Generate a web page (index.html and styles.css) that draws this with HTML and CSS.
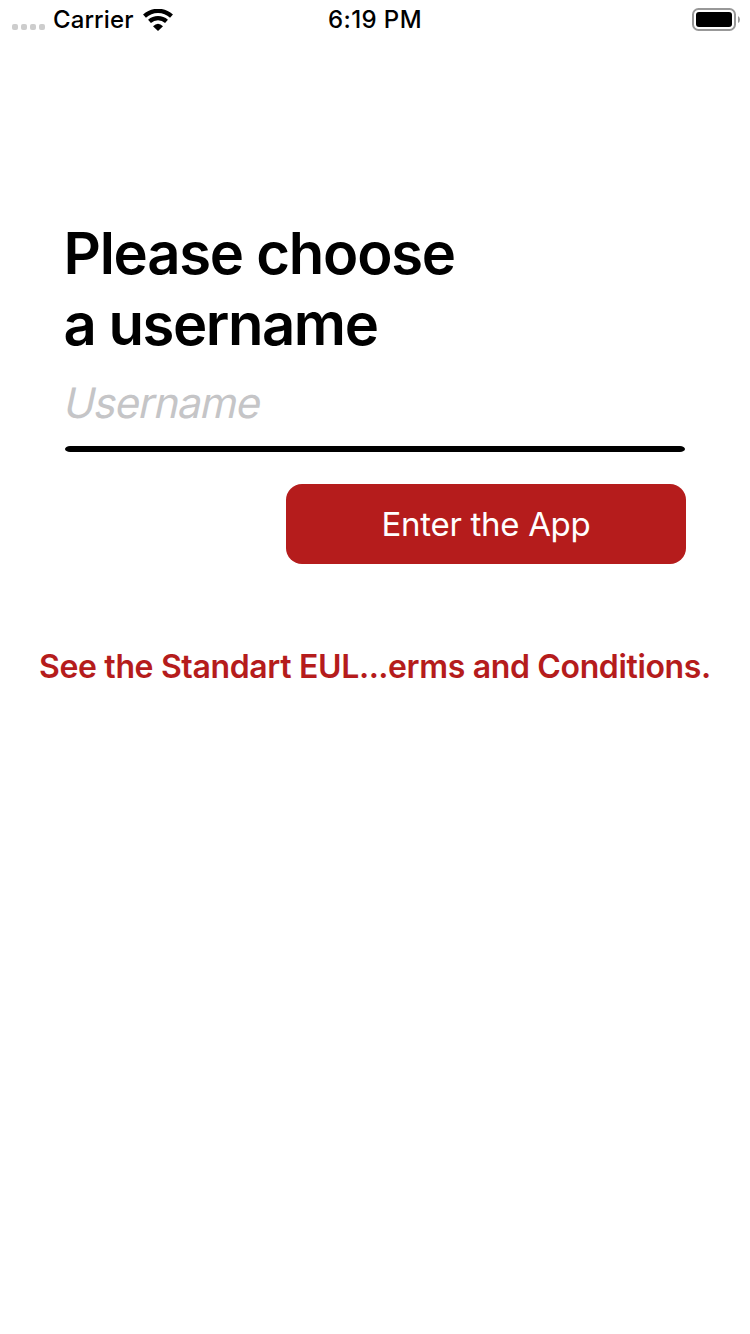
FILE: index.html
```html
<!DOCTYPE html>
<html lang="en">
<head>
<meta charset="utf-8">
<title>Choose a username</title>
<link rel="stylesheet" href="styles.css">
</head>
<body>
<header class="status">
  <div class="status-left">
    <span class="signal"><i class="dot"></i><i class="dot"></i><i class="dot"></i><i class="dot"></i></span>
    <span class="carrier">Carrier</span>
    <svg class="wifi" width="30" height="22" viewBox="0 0 30 22">
      <g fill="none" stroke="#000" stroke-width="4.3">
        <path d="M1.5 7.1 A20 20 0 0 1 28.5 7.1"/>
        <path d="M6.5 12.3 A12.8 12.8 0 0 1 23.5 12.3"/>
      </g>
      <path d="M10 17.3 Q15 12.3 20 17.3 L15 22 Z"/>
    </svg>
  </div>
  <span class="time">6:19 PM</span>
  <div class="status-right">
    <svg width="49" height="24" viewBox="0 0 49 24">
      <rect x="1" y="1" width="42" height="21" rx="5.5" fill="none" stroke="#989898" stroke-width="2"/>
      <rect x="4" y="4" width="36" height="15" rx="3" fill="#000"/>
      <path d="M46 8 Q48 9 48 11.5 Q48 14 46 15 Z" fill="#989898"/>
    </svg>
  </div>
</header>
<main class="form">
  <h1 class="title"><span class="line-one">Please choose</span><br><span class="line-two">a username</span></h1>
  <input class="field" type="text" placeholder="Username" aria-label="Username">
  <svg class="rule" width="620" height="6" viewBox="0 0 620 6"><rect width="620" height="6" rx="5" ry="3"/></svg>
  <button class="enter" type="button">Enter the App</button>
</main>
<a class="terms">See the Standart EUL<span class="ellipsis">...</span>erms and Conditions.</a>
</body>
</html>
```
FILE: styles.css
```css
* {
  box-sizing: border-box;
}

body {
  margin: 0;
  min-height: 1334px;
  background: #fff;
  color: #000;
  font-family: Inter, "Liberation Sans", sans-serif;
}

.status {
  display: grid;
  grid-template-columns: 1fr auto 1fr;
  height: 40px;
  padding: 0 9px 0 12px;
  font-size: 24px;
  font-weight: 450;
  line-height: 40px;
}

.status-left {
  display: flex;
}

.signal {
  display: flex;
  gap: 3px;
  padding-top: 24px;
}

.dot {
  width: 6px;
  height: 6px;
  border-radius: 2px;
  background: #cdcdcd;
}

.carrier {
  width: 90px;
  padding-left: 8px;
  letter-spacing: 0.1px;
}

.time {
  margin-left: -3px;
  letter-spacing: 0.4px;
}

.wifi {
  margin: 9px 0 0 7.5px;
}

.status-right {
  display: flex;
  justify-content: flex-end;
  padding-top: 8px;
}

.form {
  display: flex;
  flex-direction: column;
  padding: 178px 64px 0;
}

.title {
  margin: 0 0 0 -0.5px;
  font-size: 58px;
  font-weight: 620;
  line-height: 71px;
}

.line-one {
  letter-spacing: -1.25px;
}

.line-two {
  letter-spacing: -1.45px;
}

.field {
  height: 50px;
  margin-top: 18px;
  margin-left: -2px;
  padding: 0;
  border: 0;
  outline: 0;
  background: none;
  font: 400 42px/50px Inter, sans-serif;
  letter-spacing: -1px;
  transform: skewX(-12deg);
  transform-origin: 0 80%;
}

.field::placeholder {
  color: #c5c5c7;
  opacity: 1;
}

.rule {
  margin: 18px 0 0 1px;
}

.enter {
  align-self: flex-end;
  width: 400px;
  height: 80px;
  margin-top: 32px;
  padding: 0;
  border: 0;
  border-radius: 16px;
  background: #b51c1c;
  color: #fff;
  font: 400 33px/80px Inter, sans-serif;
  letter-spacing: -0.3px;
}

.terms {
  display: block;
  margin-top: 83px;
  color: #b51c1c;
  font-size: 32px;
  font-weight: 600;
  line-height: 40px;
  letter-spacing: -0.35px;
  text-align: center;
  white-space: nowrap;
}

.ellipsis {
  letter-spacing: -0.5px;
}
```
